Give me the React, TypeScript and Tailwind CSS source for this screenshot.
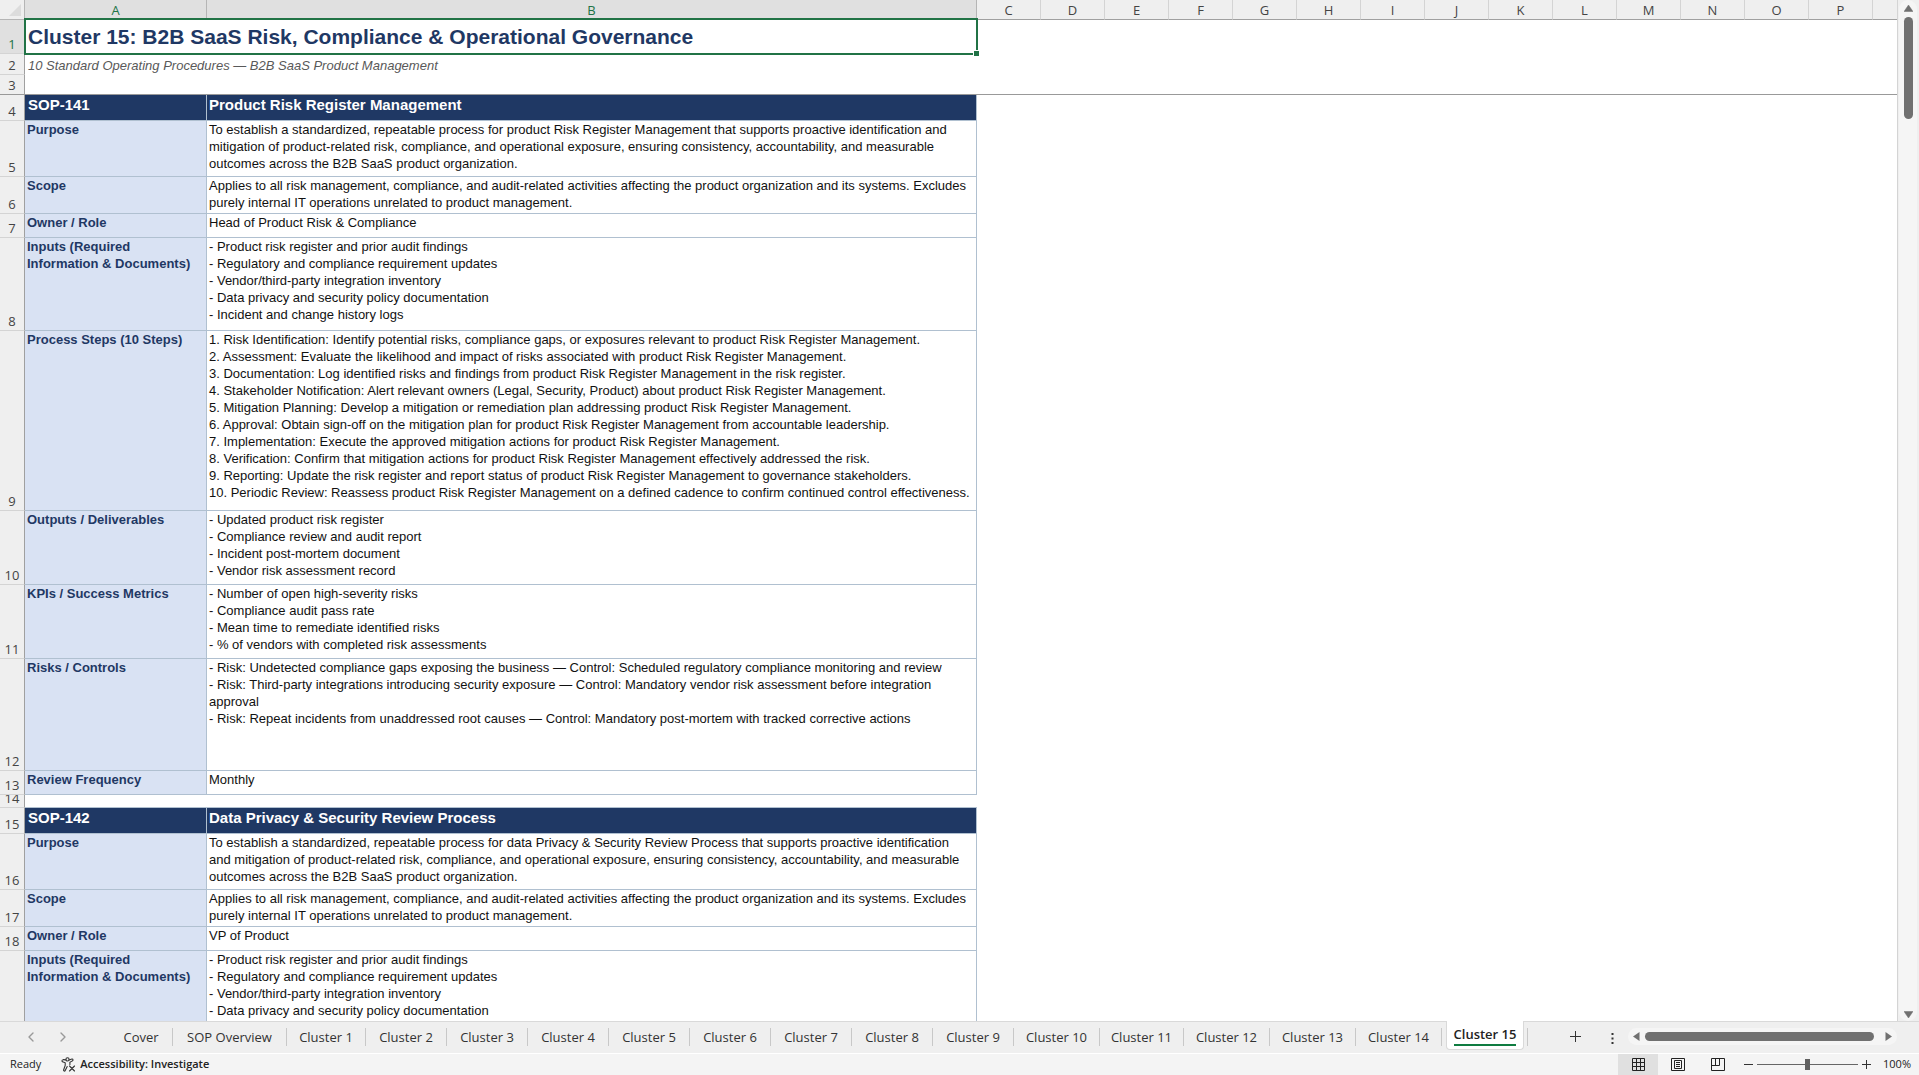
import { ChevronLeft, ChevronRight } from "lucide-react";
import { clsx } from "clsx";

type RowKind = "title" | "subtitle" | "blank" | "frozen" | "heading" | "field";

interface SheetRow {
  kind: RowKind;
  // height of the row without its bottom border
  height: string;
  label?: string[];
  lines?: string[];
}

const COLUMNS = ["C", "D", "E", "F", "G", "H", "I", "J", "K", "L", "M", "N", "O", "P"];

const INPUTS = [
  "- Product risk register and prior audit findings",
  "- Regulatory and compliance requirement updates",
  "- Vendor/third-party integration inventory",
  "- Data privacy and security policy documentation",
  "- Incident and change history logs",
];

const SCOPE = [
  "Applies to all risk management, compliance, and audit-related activities affecting the product organization and its systems. Excludes",
  "purely internal IT operations unrelated to product management.",
];

const ROWS: SheetRow[] = [
  { kind: "title", height: "h-[33px]", lines: ["Cluster 15: B2B SaaS Risk, Compliance & Operational Governance"] },
  { kind: "subtitle", height: "h-5", lines: ["10 Standard Operating Procedures — B2B SaaS Product Management"] },
  { kind: "frozen", height: "h-[19px]" },
  { kind: "heading", height: "h-[25px]", label: ["SOP-141"], lines: ["Product Risk Register Management"] },
  {
    kind: "field",
    height: "h-[55px]",
    label: ["Purpose"],
    lines: [
      "To establish a standardized, repeatable process for product Risk Register Management that supports proactive identification and",
      "mitigation of product-related risk, compliance, and operational exposure, ensuring consistency, accountability, and measurable",
      "outcomes across the B2B SaaS product organization.",
    ],
  },
  { kind: "field", height: "h-9", label: ["Scope"], lines: SCOPE },
  { kind: "field", height: "h-[23px]", label: ["Owner / Role"], lines: ["Head of Product Risk & Compliance"] },
  { kind: "field", height: "h-[92px]", label: ["Inputs (Required", "Information & Documents)"], lines: INPUTS },
  {
    kind: "field",
    height: "h-[179px]",
    label: ["Process Steps (10 Steps)"],
    lines: [
      "1. Risk Identification: Identify potential risks, compliance gaps, or exposures relevant to product Risk Register Management.",
      "2. Assessment: Evaluate the likelihood and impact of risks associated with product Risk Register Management.",
      "3. Documentation: Log identified risks and findings from product Risk Register Management in the risk register.",
      "4. Stakeholder Notification: Alert relevant owners (Legal, Security, Product) about product Risk Register Management.",
      "5. Mitigation Planning: Develop a mitigation or remediation plan addressing product Risk Register Management.",
      "6. Approval: Obtain sign-off on the mitigation plan for product Risk Register Management from accountable leadership.",
      "7. Implementation: Execute the approved mitigation actions for product Risk Register Management.",
      "8. Verification: Confirm that mitigation actions for product Risk Register Management effectively addressed the risk.",
      "9. Reporting: Update the risk register and report status of product Risk Register Management to governance stakeholders.",
      "10. Periodic Review: Reassess product Risk Register Management on a defined cadence to confirm continued control effectiveness.",
    ],
  },
  {
    kind: "field",
    height: "h-[73px]",
    label: ["Outputs / Deliverables"],
    lines: [
      "- Updated product risk register",
      "- Compliance review and audit report",
      "- Incident post-mortem document",
      "- Vendor risk assessment record",
    ],
  },
  {
    kind: "field",
    height: "h-[73px]",
    label: ["KPIs / Success Metrics"],
    lines: [
      "- Number of open high-severity risks",
      "- Compliance audit pass rate",
      "- Mean time to remediate identified risks",
      "- % of vendors with completed risk assessments",
    ],
  },
  {
    kind: "field",
    height: "h-[111px]",
    label: ["Risks / Controls"],
    lines: [
      "- Risk: Undetected compliance gaps exposing the business — Control: Scheduled regulatory compliance monitoring and review",
      "- Risk: Third-party integrations introducing security exposure — Control: Mandatory vendor risk assessment before integration",
      "approval",
      "- Risk: Repeat incidents from unaddressed root causes — Control: Mandatory post-mortem with tracked corrective actions",
    ],
  },
  { kind: "field", height: "h-[23px]", label: ["Review Frequency"], lines: ["Monthly"] },
  { kind: "blank", height: "h-3" },
  { kind: "heading", height: "h-[25px]", label: ["SOP-142"], lines: ["Data Privacy & Security Review Process"] },
  {
    kind: "field",
    height: "h-[55px]",
    label: ["Purpose"],
    lines: [
      "To establish a standardized, repeatable process for data Privacy & Security Review Process that supports proactive identification",
      "and mitigation of product-related risk, compliance, and operational exposure, ensuring consistency, accountability, and measurable",
      "outcomes across the B2B SaaS product organization.",
    ],
  },
  { kind: "field", height: "h-9", label: ["Scope"], lines: SCOPE },
  { kind: "field", height: "h-[23px]", label: ["Owner / Role"], lines: ["VP of Product"] },
  // the last row runs under the tab bar, so only the first four inputs show
  {
    kind: "field",
    height: "h-[92px]",
    label: ["Inputs (Required", "Information & Documents)"],
    lines: INPUTS.slice(0, 4),
  },
];

const TABS = [
  { name: "Cover", width: "w-[63px]" },
  { name: "SOP Overview", width: "w-[114px]" },
  ...Array.from({ length: 9 }, (_, i) => ({
    name: `Cluster ${i + 1}`,
    width: i === 0 ? "w-[79px]" : "w-[81px]",
  })),
  ...Array.from({ length: 5 }, (_, i) => ({
    name: `Cluster ${i + 10}`,
    width: i === 1 ? "w-[84px]" : "w-[86px]",
  })),
];

function Lines({ lines }: { lines: string[] }) {
  return (
    <>
      {lines.map((line) => (
        <div key={line} className="whitespace-nowrap">
          {line}
        </div>
      ))}
    </>
  );
}

function ColumnHeader({ name, selected }: { name: string; selected?: boolean }) {
  return (
    <th
      scope="col"
      className={clsx(
        "h-5 border-r border-b border-b-[#a0a0a0] p-0 pt-px text-[13px] leading-[18px] font-normal",
        selected ? "border-r-[#b5b5b5] bg-[#e0e0e0] text-[#217346]" : "border-r-[#d4d4d4] text-[#444]",
      )}
    >
      {name}
    </th>
  );
}

function RowCells({ row }: { row: SheetRow }) {
  const lines = row.lines ?? [];

  if (row.kind === "title") {
    return (
      <td
        colSpan={2}
        className="relative p-0 pl-[3px] align-top text-[21px] leading-[33px] font-bold text-[#1f3864]"
      >
        <Lines lines={lines} />
        {/* Selection frame and fill handle */}
        <div className="absolute -top-[2px] -right-px -bottom-px -left-px border-2 border-[#217346]" />
        <div className="absolute -right-[3px] -bottom-[3px] size-[7px] border border-white bg-[#217346]" />
      </td>
    );
  }
  if (row.kind === "subtitle") {
    return (
      <td colSpan={2} className="p-0 pt-[3px] pl-[3px] align-top text-[13px] leading-[17px] text-[#595959] italic">
        <Lines lines={lines} />
      </td>
    );
  }
  if (row.kind === "frozen") {
    return <td colSpan={2} className="border-b border-[#999] p-0" />;
  }
  if (row.kind === "blank") {
    return <td colSpan={2} className="border-b border-[#b0c0d0] p-0" />;
  }
  if (row.kind === "heading") {
    const cell =
      "border-r border-b border-[#b0c0d0] bg-[#1f3864] p-0 text-left align-top text-[15px] leading-5 font-bold text-white";
    return (
      <>
        <td className={clsx(cell, "pl-[3px]")}>
          <Lines lines={row.label ?? []} />
        </td>
        <td className={clsx(cell, "pl-[2px]")}>
          <Lines lines={lines} />
        </td>
      </>
    );
  }
  return (
    <>
      <td className="border-r border-b border-[#b0c0d0] bg-[#d9e2f3] p-0 pl-[2px] align-top text-[13px] leading-[17px] font-bold text-[#1f3864]">
        <Lines lines={row.label ?? []} />
      </td>
      <td className="border-r border-b border-[#b0c0d0] p-0 pl-[2px] align-top text-[13px] leading-[17px] text-[#111]">
        <Lines lines={lines} />
      </td>
    </>
  );
}

function Sheet() {
  return (
    <div className="min-w-0 flex-1 overflow-hidden bg-white">
      <table className="w-full table-fixed border-separate border-spacing-0 font-['Liberation_Sans',Arial,sans-serif]">
        <colgroup>
          <col className="w-[25px]" />
          <col className="w-[182px]" />
          <col className="w-[770px]" />
          {COLUMNS.map((name) => (
            <col key={name} className="w-16" />
          ))}
          <col />
        </colgroup>
        <thead className="bg-[#efefef] font-['Open_Sans',sans-serif]">
          <tr>
            <td className="h-5 border-r border-b border-[#b5b5b5] p-0">
              <svg viewBox="0 0 24 19" className="h-[19px] w-6" aria-hidden="true">
                <path d="M21 4v12H9z" fill="#dcdcdc" />
              </svg>
            </td>
            <ColumnHeader name="A" selected />
            <ColumnHeader name="B" selected />
            {COLUMNS.map((name) => (
              <ColumnHeader key={name} name={name} />
            ))}
            <td className="border-b border-[#a0a0a0] p-0" />
          </tr>
        </thead>
        <tbody>
          {ROWS.map((row, i) => (
            <tr key={i}>
              <th
                scope="row"
                className={clsx(
                  "border-r border-b border-r-[#a0a0a0] p-0 font-['Open_Sans',sans-serif] text-[13px] font-normal",
                  i === 0 ? "bg-[#e0e0e0] text-[#217346]" : "bg-[#efefef] text-[#444]",
                  row.kind === "frozen" ? "border-b-[#999]" : "border-b-[#d4d4d4]",
                )}
              >
                <div className={clsx("flex items-end justify-center overflow-hidden", row.height)}>
                  <span className="leading-[18px]">{i + 1}</span>
                </div>
              </th>
              <RowCells row={row} />
              <td
                colSpan={COLUMNS.length + 1}
                className={clsx("p-0", row.kind === "frozen" && "border-b border-[#999]")}
              />
            </tr>
          ))}
        </tbody>
      </table>
    </div>
  );
}

function VerticalScroll() {
  return (
    <div className="flex w-[22px] shrink-0 flex-col border-l border-[#d4d4d4] pr-[2px] pl-px">
      <div className="flex flex-1 flex-col items-center rounded-full bg-[#f5f5f5]">
        <button type="button" aria-label="Scroll up" className="pt-[5px]">
          <svg viewBox="0 0 9 7" className="block h-[7px] w-[9px]" fill="#707070">
            <path d="M4.5 0 9 6.5H0z" stroke="#707070" strokeWidth=".5" strokeLinejoin="round" />
          </svg>
        </button>
        <div className="mt-[5px] h-[102px] w-[9px] rounded-full bg-[#707070]" />
        <button type="button" aria-label="Scroll down" className="mt-auto pb-[3px]">
          <svg viewBox="0 0 9 7" className="block h-[7px] w-[9px]" fill="#707070">
            <path d="M4.5 7 9 .5H0z" stroke="#707070" strokeWidth=".5" strokeLinejoin="round" />
          </svg>
        </button>
      </div>
    </div>
  );
}

function TabBar() {
  return (
    <nav className="flex h-8 shrink-0 items-start border-t border-[#d9d9d9] pr-[22px] font-['Open_Sans',sans-serif] text-[13px] text-[#333]">
      <div className="flex h-[30px] w-[110px] items-center gap-4 pl-[23px] text-[#999]">
        <button type="button" aria-label="Previous sheet">
          <ChevronLeft className="size-4" strokeWidth={2} />
        </button>
        <button type="button" aria-label="Next sheet">
          <ChevronRight className="size-4" strokeWidth={2} />
        </button>
      </div>
      {TABS.map(({ name, width }) => (
        <button
          key={name}
          type="button"
          className={clsx("mt-[6px] h-[18px] shrink-0 border-r border-[#c8c8c8] leading-[18px] whitespace-nowrap", width)}
        >
          {name}
        </button>
      ))}
      <button
        type="button"
        aria-current="page"
        className="-mt-px ml-1 flex h-[29px] w-[78px] shrink-0 justify-center rounded-b-[4px] border border-t-0 border-[#d9d9d9] bg-white font-semibold text-[#222]"
      >
        <span className="mt-[3px] h-[22px] border-b-2 border-[#107c41] leading-[20px]">Cluster 15</span>
      </button>
      <div className="mt-[6px] ml-[3px] h-[18px] w-px bg-[#c8c8c8]" />
      <button type="button" aria-label="New sheet" className="mt-[9px] ml-[42px]">
        <svg viewBox="0 0 11 11" className="size-[11px]" stroke="#333" fill="none">
          <path d="M5.5 0v11M0 5.5h11" />
        </svg>
      </button>
      <button type="button" aria-label="Sheet options" className="mt-[11px] ml-[30px]">
        <svg viewBox="0 0 3 11" className="h-[11px] w-[3px]" fill="#333">
          <path d="M.5 0h2v2h-2zM.5 4.5h2v2h-2zM.5 9h2v2h-2z" />
        </svg>
      </button>
      <div className="mt-[6px] ml-[14px] flex h-[17px] flex-1 items-center rounded-full bg-[#f5f5f5] px-[5px]">
        <button type="button" aria-label="Scroll left">
          <svg viewBox="0 0 7 9" className="h-[9px] w-[7px]" fill="#707070">
            <path d="M0 4.5 6.5 0v9z" />
          </svg>
        </button>
        <div className="mr-[11px] ml-[5px] h-[9px] flex-1 rounded-full bg-[#707070]" />
        <button type="button" aria-label="Scroll right">
          <svg viewBox="0 0 7 9" className="h-[9px] w-[7px]" fill="#707070">
            <path d="M7 4.5.5 0v9z" />
          </svg>
        </button>
      </div>
    </nav>
  );
}

function StatusBar() {
  return (
    <footer className="flex h-[22px] shrink-0 items-center border-t border-white bg-[#f4f4f4] pl-[10px] font-['Open_Sans',sans-serif] text-[11px] text-[#222]">
      <span>Ready</span>
      <button type="button" className="ml-5 flex items-center gap-1 font-semibold">
        <svg viewBox="0 0 15 15" className="size-[15px]" fill="none" stroke="#333" strokeWidth="1.1" strokeLinecap="round">
          <circle cx="6.5" cy="2.4" r="1.6" />
          <path d="M1.2 3.2c-.7 1 .2 1.5 1 1.8l2 .8v2.6L2.6 13c-.2 1.2 1.2 1.5 1.6.5l2-4M4.9 2.9 2.2 2.6M8.1 2.9l2.8-.9c1.3-.2 1.5 1.5.4 1.9L8.9 5.4v2M8.5 9l5 5M13.5 9l-5 5" />
        </svg>
        Accessibility: Investigate
      </button>
      <div className="ml-auto flex h-full items-center">
        <button type="button" aria-label="Normal view" className="flex h-full w-10 items-center justify-center bg-[#e0e0e0]">
          <svg viewBox="0 0 13 13" className="size-[13px]" fill="none" stroke="#222">
            <path d="M.5.5h12v12H.5zM4.5.5v12M8.5.5v12M.5 4.5h12M.5 8.5h12" />
          </svg>
        </button>
        <button type="button" aria-label="Page layout" className="flex h-full w-10 items-center justify-center">
          <svg viewBox="0 0 14 13" className="h-[13px] w-[14px]" fill="none" stroke="#222">
            <path d="M.5.5h13v12H.5zM3.5 2.5h7v8h-7zM5 4.5h4M5 6.5h4M5 8.5h4" />
          </svg>
        </button>
        <button type="button" aria-label="Page break preview" className="flex h-full w-10 items-center justify-center">
          <svg viewBox="0 0 14 13" className="h-[13px] w-[14px]" fill="none" stroke="#222">
            <path d="M.5.5h13v12H.5zM4.5.5v7M8.5.5v7M.5 7.5h8" />
          </svg>
        </button>
        <button type="button" aria-label="Zoom out" className="ml-[6px]">
          <svg viewBox="0 0 9 9" className="size-[9px]" stroke="#333">
            <path d="M0 4.5h9" />
          </svg>
        </button>
        <input
          type="range"
          aria-label="Zoom"
          min={0}
          max={100}
          defaultValue={50}
          className="mx-1 h-3 w-[101px] appearance-none bg-[linear-gradient(#666,#666)] bg-[length:100%_1px] bg-center bg-no-repeat [&::-webkit-slider-thumb]:h-[11px] [&::-webkit-slider-thumb]:w-[5px] [&::-webkit-slider-thumb]:appearance-none [&::-webkit-slider-thumb]:bg-[#606060]"
        />
        <button type="button" aria-label="Zoom in">
          <svg viewBox="0 0 9 9" className="size-[9px]" stroke="#333">
            <path d="M0 4.5h9M4.5 0v9" />
          </svg>
        </button>
        <button type="button" className="w-12 pr-2 text-right">
          100%
        </button>
      </div>
    </footer>
  );
}

export default function App() {
  return (
    <div className="flex h-screen flex-col overflow-hidden bg-[#efefef]">
      <main className="flex min-h-0 flex-1">
        <Sheet />
        <VerticalScroll />
      </main>
      <TabBar />
      <StatusBar />
    </div>
  );
}
